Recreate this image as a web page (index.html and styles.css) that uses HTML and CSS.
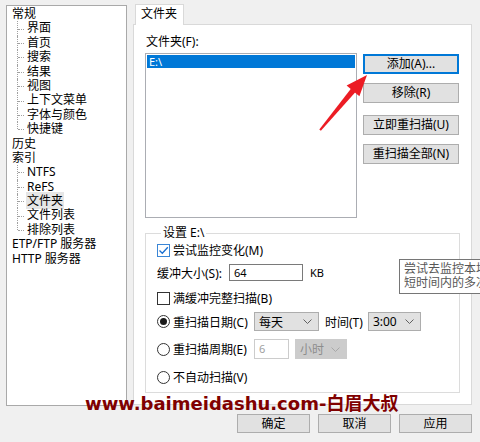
FILE: index.html
```html
<!DOCTYPE html>
<html lang="zh-CN">
<head>
<meta charset="utf-8">
<link rel="stylesheet" href="styles.css">
</head>
<body>
<div class="window">
  <div class="main">
    <div class="tree">
      <div class="node root">常规</div>
      <div class="children">
        <div class="node child">界面</div>
        <div class="node child">首页</div>
        <div class="node child">搜索</div>
        <div class="node child">结果</div>
        <div class="node child">视图</div>
        <div class="node child">上下文菜单</div>
        <div class="node child">字体与颜色</div>
        <div class="node child last">快捷键</div>
      </div>
      <div class="node root">历史</div>
      <div class="node root">索引</div>
      <div class="children">
        <div class="node child">NTFS</div>
        <div class="node child">ReFS</div>
        <div class="node child"><span class="sel">文件夹</span></div>
        <div class="node child">文件列表</div>
        <div class="node child last">排除列表</div>
      </div>
      <div class="node root">ETP/FTP 服务器</div>
      <div class="node root">HTTP 服务器</div>
    </div>

    <div class="tabs">
      <div class="tab-strip"><div class="tab">文件夹</div></div>
      <div class="panel">
        <div class="label">文件夹(F):</div>
        <div class="folder-row">
          <div class="listbox"><div class="list-item">E:\</div></div>
          <div class="btn-col">
            <button class="btn focus">添加(A)...</button>
            <button class="btn b2">移除(R)</button>
            <button class="btn b3">立即重扫描(U)</button>
            <button class="btn b4">重扫描全部(N)</button>
          </div>
        </div>
        <fieldset class="group">
          <legend>设置 E:\</legend>
          <div class="row r1">
            <span class="check on"><svg width="11" height="11" viewBox="0 0 11 11"><path d="M1.5 5.5 L4.3 8.3 L9.8 2.2" fill="none" stroke="#1a6fd0" stroke-width="1.3"/></svg></span>
            <span class="ctext">尝试监控变化(M)</span>
          </div>
          <div class="row r2">
            <span class="flabel">缓冲大小(S):</span>
            <span class="input w74">64</span>
            <span class="kb">KB</span>
          </div>
          <div class="row r3">
            <span class="check"></span>
            <span class="ctext">满缓冲完整扫描(B)</span>
          </div>
          <div class="row r4">
            <span class="rlabel"><span class="radio on"></span><span class="ctext">重扫描日期(C)</span></span>
            <span class="combo w65"><span>每天</span><svg width="9" height="5" viewBox="0 0 9 5"><path d="M0.5 0.5 L4.5 4.5 L8.5 0.5" fill="none" stroke="#606060"/></svg></span>
            <span class="tlabel">时间(T)</span>
            <span class="combo w53"><span>3:00</span><svg width="9" height="5" viewBox="0 0 9 5"><path d="M0.5 0.5 L4.5 4.5 L8.5 0.5" fill="none" stroke="#606060"/></svg></span>
          </div>
          <div class="row r5">
            <span class="rlabel"><span class="radio"></span><span class="ctext">重扫描周期(E)</span></span>
            <span class="input w35 dis">6</span>
            <span class="combo w52 dis"><span>小时</span><svg width="9" height="5" viewBox="0 0 9 5"><path d="M0.5 0.5 L4.5 4.5 L8.5 0.5" fill="none" stroke="#a8a8a8"/></svg></span>
          </div>
          <div class="row r6">
            <span class="rlabel"><span class="radio"></span><span class="ctext">不自动扫描(V)</span></span>
          </div>
        </fieldset>
      </div>
    </div>
  </div>

  <div class="footer">
    <button class="btn fbtn">确定</button>
    <button class="btn fbtn">取消</button>
    <button class="btn fbtn">应用</button>
  </div>

  <div class="tooltip">尝试去监控本地文件夹的变化，<br>短时间内的多次变化将被合并</div>
  <div class="watermark">www.baimeidashu.com-白眉大叔</div>
  <svg class="arrow" width="480" height="442" viewBox="0 0 480 442">
    <polygon points="319.3,129.6 320.9,130.8 355.3,92.2 351.1,88.6" fill="#ec1c24"/>
    <polygon points="367,75 346.6,85.4 359.4,96.2" fill="#ec1c24"/>
  </svg>
</div>
</body>
</html>
```

FILE: styles.css
```css
* { box-sizing: border-box; }
html, body { margin: 0; padding: 0; }
body {
  background: #f0f0f0;
  font-family: "Noto Sans", "Noto Sans CJK SC", sans-serif;
  font-size: 12px;
  color: #000;
}
.window {
  position: relative;
  width: 480px;
  height: 442px;
  padding: 4px 8px 0 6px;
  overflow: hidden;
}
.main {
  display: flex;
  gap: 6px;
  height: 402px;
}

/* tree */
.tree {
  width: 121px;
  height: 401px;
  margin-top: 1px;
  background: #fff;
  border: 1px solid #a9a9a9;
  padding-top: 1px;
}
.node {
  height: 14.4px;
  line-height: 14.4px;
  white-space: nowrap;
}
.root { padding-left: 5px; }
.child {
  position: relative;
  padding-left: 20px;
}
.child::before {
  content: "";
  position: absolute;
  left: 10px;
  top: 0;
  bottom: 0;
  border-left: 1px dotted #a0a0a0;
}
.child.last::before { bottom: 50%; }
.child::after {
  content: "";
  position: absolute;
  left: 11px;
  top: 50%;
  width: 6px;
  border-top: 1px dotted #a0a0a0;
}
.sel {
  background: #e6e6e6;
  padding: 0 1px;
  margin-left: -1px;
}

/* tabs */
.tabs {
  width: 339px;
  display: flex;
  flex-direction: column;
}
.tab-strip {
  height: 20px;
  display: flex;
  padding-left: 2px;
}
.tab {
  position: relative;
  z-index: 1;
  height: 21px;
  margin-bottom: -1px;
  padding: 0 6px 0 5px;
  line-height: 18px;
  background: #fff;
  border: 1px solid #d9d9d9;
  border-bottom: none;
}
.panel {
  height: 381px;
  background: #fff;
  border: 1px solid #d9d9d9;
  padding: 9px 11px 0 11px;
}
.label {
  line-height: 16px;
  height: 16px;
  padding-left: 1px;
}
.folder-row {
  display: flex;
  gap: 6px;
  margin-top: 3px;
}
.listbox {
  width: 212px;
  height: 165px;
  border: 1px solid #abadb3;
  padding: 1px;
}
.list-item {
  height: 13px;
  line-height: 13px;
  background: #0078d7;
  color: #fff;
  padding-left: 2px;
  font-size: 11px;
}
.btn-col {
  display: flex;
  flex-direction: column;
  width: 96px;
  padding-top: 1px;
}
.btn {
  font-family: inherit;
  font-size: 12px;
  color: #000;
  background: #e1e1e1;
  border: 1px solid #adadad;
  height: 20px;
  padding: 0;
  margin: 0;
  line-height: 16px;
}
.btn.focus {
  border-color: #0078d7;
  box-shadow: inset 0 0 0 1px #0078d7;
}
.b2 { margin-top: 9px; }
.b3 { margin-top: 12px; }
.b4 { margin-top: 9px; }

/* group */
.group {
  margin: 7px 0 0 0;
  width: 315px;
  height: 168px;
  border: 1px solid #dcdcdc;
  padding: 1px 10px 0 11px;
}
.group legend {
  padding: 0 2px;
  margin-left: 4px;
  line-height: 16px;
}
.row {
  display: flex;
  align-items: center;
  white-space: nowrap;
}
.r1 { height: 16px; }
.r2 { height: 17px; margin-top: 6px; }
.r3 { height: 16px; margin-top: 9px; }
.r4 { height: 19px; margin-top: 6px; }
.r5 { height: 20px; margin-top: 8px; }
.r6 { height: 16px; margin-top: 10px; }
.check {
  width: 13px;
  height: 13px;
  border: 1px solid #333;
  background: #fff;
  display: flex;
  align-items: center;
  justify-content: center;
  flex: none;
}
.check.on { border-color: #3a86d6; }
.ctext { margin-left: 3px; }
.flabel { width: 72px; }
.input {
  height: 100%;
  border: 1px solid #7a7a7a;
  background: #fff;
  padding-left: 4px;
  line-height: 15px;
  font-size: 11px;
}
.input.dis {
  border-color: #cccccc;
  color: #a0a0a0;
  line-height: 18px;
}
.w74 { width: 74px; }
.w35 { width: 35px; }
.kb { margin-left: 7px; font-size: 11px; }
.rlabel {
  width: 97px;
  display: flex;
  align-items: center;
}
.radio {
  width: 13px;
  height: 13px;
  border: 1px solid #333;
  border-radius: 50%;
  background: #fff;
  flex: none;
  display: flex;
  align-items: center;
  justify-content: center;
}
.radio.on::after {
  content: "";
  width: 7px;
  height: 7px;
  border-radius: 50%;
  background: #1a1a1a;
}
.combo {
  height: 100%;
  background: #e1e1e1;
  border: 1px solid #adadad;
  display: flex;
  align-items: center;
  justify-content: space-between;
  padding: 0 6px 0 4px;
  font-size: 12px;
}
.combo.dis {
  background: #cccccc;
  border-color: #cccccc;
  color: #8d8d8d;
}
.w65 { width: 65px; }
.w53 { width: 53px; }
.w52 { width: 52px; margin-left: 6px; }
.tlabel { margin: 0 5px 0 6px; }

/* footer */
.footer {
  display: flex;
  justify-content: flex-end;
  gap: 8px;
  margin-top: 8px;
}
.fbtn {
  width: 73px;
  height: 19px;
}

/* overlays */
.tooltip {
  position: absolute;
  left: 399px;
  top: 259px;
  width: 120px;
  height: 35px;
  background: #fff;
  border: 1px solid #767676;
  color: #575757;
  padding: 2px 0 0 4px;
  line-height: 14px;
  white-space: nowrap;
}
.watermark {
  position: absolute;
  left: 85px;
  top: 392px;
  font-family: "DejaVu Sans", "Noto Sans CJK SC", sans-serif;
  font-weight: bold;
  font-size: 18px;
  line-height: 24px;
  color: #800000;
  white-space: nowrap;
}
.arrow {
  position: absolute;
  left: 0;
  top: 0;
  pointer-events: none;
}
```
